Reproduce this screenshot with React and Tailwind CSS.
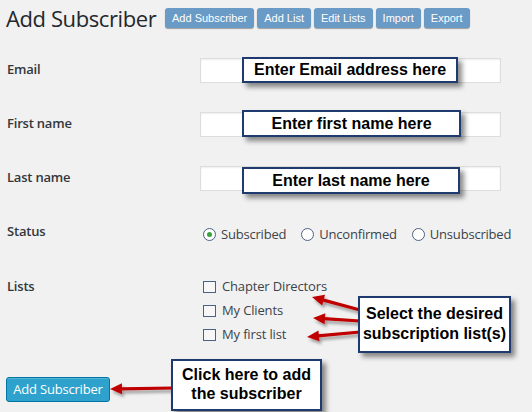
import React from "react";

function Arrow({ x1, y1, x2, y2 }) {
  const dx = x2 - x1;
  const dy = y2 - y1;
  const len = Math.sqrt(dx * dx + dy * dy);
  const ux = dx / len;
  const uy = dy / len;
  const hl = 12;
  const hw = 5.5;
  const bx = x2 - ux * hl;
  const by = y2 - uy * hl;
  const px = -uy;
  const py = ux;
  const pts = `${x2},${y2} ${bx + px * hw},${by + py * hw} ${bx - px * hw},${by - py * hw}`;
  return (
    <g>
      <line x1={x1} y1={y1} x2={bx + ux * 1} y2={by + uy * 1} stroke="#c00000" strokeWidth="3.2" />
      <polygon points={pts} fill="#c00000" />
    </g>
  );
}

function Callout({ className, children }) {
  return (
    <div
      className={
        "absolute bg-white border-2 border-[#1f3a6e] shadow-[4px_4px_5px_rgba(0,0,0,0.45)] flex flex-col items-center justify-center text-center text-black font-bold text-[16px] font-['Liberation_Sans',Arial,sans-serif] " +
        className
      }
    >
      {children}
    </div>
  );
}

function TopButton({ children }) {
  return (
    <div className="h-[20px] px-[7px] flex items-center rounded-[3px] bg-[#6a9ac6] text-white text-[11px] font-['Liberation_Sans',Arial,sans-serif] shadow-[0_1px_1px_rgba(0,0,0,0.35)]">
      {children}
    </div>
  );
}

function Row({ label, children }) {
  return (
    <div className="flex items-center h-[54px]">
      <div className="w-[200px] pl-[7px] text-[13px] text-[#32373c] font-semibold tracking-[-0.2px]">{label}</div>
      {children}
    </div>
  );
}

function TextInput() {
  return <div className="w-[301px] h-[25px] bg-white border border-[#dddddd] shadow-[inset_0_1px_2px_rgba(0,0,0,0.07)]" />;
}

function Radio({ checked, label }) {
  return (
    <div className="flex items-center gap-[5px]">
      <div className="w-[13px] h-[13px] rounded-full border border-[#4d6282] bg-white flex items-center justify-center">
        {checked && <div className="w-[5px] h-[5px] rounded-full bg-[#3aa23a]" />}
      </div>
      <span className="text-[13px] text-[#3c434a] tracking-[-0.2px]">{label}</span>
    </div>
  );
}

function Check({ label }) {
  return (
    <div className="flex items-center gap-[6px] h-[24px]">
      <div className="w-[13px] h-[12px] border border-[#4d6282] bg-[#f7f7f7]" />
      <span className="text-[13px] text-[#3c434a] tracking-[-0.15px]">{label}</span>
    </div>
  );
}

export default function App() {
  return (
    <div className="relative w-[532px] h-[412px] overflow-hidden bg-[#f1f1f1] font-['Open_Sans',sans-serif]">
      <div className="flex items-center h-[36px] pl-[6px]">
        <div className="w-[159px] text-[22px] leading-[22px] tracking-[-0.4px] text-[#23282d]">Add Subscriber</div>
        <div className="flex gap-[3px]">
          <TopButton>Add Subscriber</TopButton>
          <TopButton>Add List</TopButton>
          <TopButton>Edit Lists</TopButton>
          <TopButton>Import</TopButton>
          <TopButton>Export</TopButton>
        </div>
      </div>

      <div className="pt-[7px]">
        <Row label="Email">
          <TextInput />
        </Row>
        <Row label="First name">
          <TextInput />
        </Row>
        <Row label="Last name">
          <TextInput />
        </Row>
        <Row label="Status">
          <div className="flex items-center gap-[15px] pl-[3px] mt-[5px]">
            <Radio checked label="Subscribed" />
            <Radio label="Unconfirmed" />
            <Radio label="Unsubscribed" />
          </div>
        </Row>
        <div className="flex items-start pt-[16px]">
          <div className="w-[200px] pl-[7px] h-[24px] flex items-center text-[13px] text-[#32373c] font-semibold tracking-[-0.2px]">Lists</div>
          <div className="flex flex-col pl-[3px]">
            <Check label="Chapter Directors" />
            <Check label="My Clients" />
            <Check label="My first list" />
          </div>
        </div>
        <div className="pl-[6px] mt-[29px]">
          <div className="inline-flex items-center h-[25px] w-[104px] justify-center rounded-[3px] bg-[#2ea2cc] border border-[#0074a2] text-white text-[13px] tracking-[-0.2px] shadow-[inset_0_1px_0_rgba(120,200,230,0.5)]">
            Add Subscriber
          </div>
        </div>
      </div>

      <svg className="absolute inset-0 pointer-events-none" width="532" height="412" viewBox="0 0 532 412">
        <defs>
          <filter id="sh" x="-20%" y="-50%" width="140%" height="200%">
            <feDropShadow dx="2" dy="3" stdDeviation="1.5" floodColor="#000" floodOpacity="0.35" />
          </filter>
        </defs>
        <g filter="url(#sh)">
          <Arrow x1={360} y1={310} x2={312} y2={297} />
          <Arrow x1={360} y1={321} x2={313} y2={318} />
          <Arrow x1={360} y1={332} x2={307} y2={337} />
          <Arrow x1={173} y1={388} x2={110} y2={389} />
        </g>
      </svg>

      <Callout className="left-[242px] top-[57px] w-[216px] h-[26px] leading-[20px]">Enter Email address here</Callout>
      <Callout className="left-[242px] top-[110px] w-[219px] h-[27px] leading-[20px]">Enter first name here</Callout>
      <Callout className="left-[242px] top-[167px] w-[218px] h-[27px] leading-[20px]">Enter last name here</Callout>
      <Callout className="left-[358px] top-[296px] w-[153px] h-[57px] leading-[20px] pb-[2px]">
        <span>Select the desired</span>
        <span>subscription list(s)</span>
      </Callout>
      <Callout className="left-[171px] top-[359px] w-[151px] h-[52px] leading-[19px] pb-[3px]">
        <span>Click here to add</span>
        <span>the subscriber</span>
      </Callout>
    </div>
  );
}
